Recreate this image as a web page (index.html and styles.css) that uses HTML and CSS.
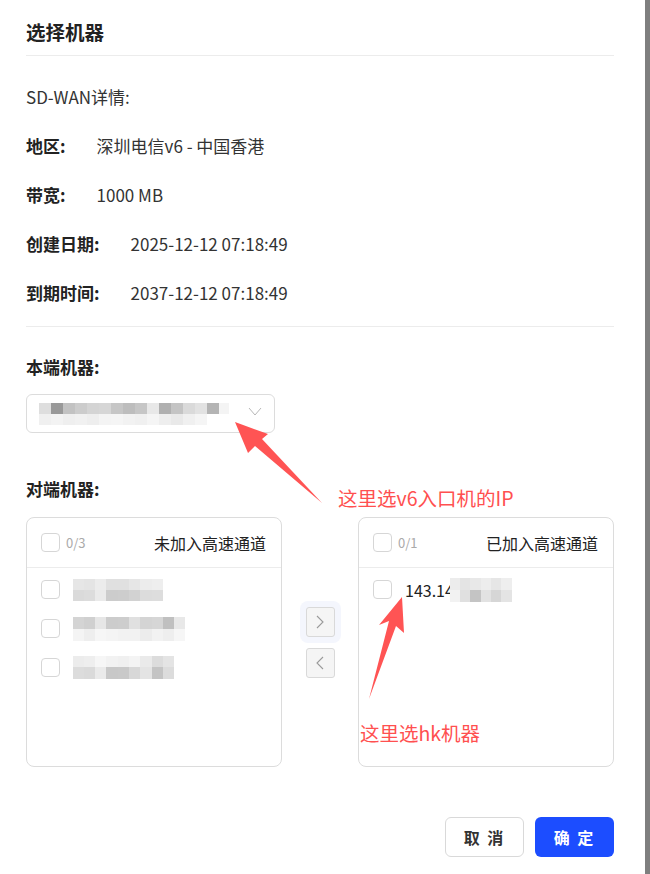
FILE: index.html
```html
<!DOCTYPE html>
<html lang="zh-CN">
<head>
    <meta charset="UTF-8">
    <meta name="viewport" content="width=device-width, initial-scale=1.0">
    <title>选择机器</title>
    <link rel="stylesheet" href="styles.css">
</head>
<body>
    <div class="modal">
        <div class="modal-header">选择机器</div>

        <div class="modal-body">
            <div class="detail-title">SD-WAN详情:</div>
            <div class="detail-row"><span class="label">地区:</span><span class="value">深圳电信v6 - 中国香港</span></div>
            <div class="detail-row"><span class="label">带宽:</span><span class="value">1000 MB</span></div>
            <div class="detail-row"><span class="label">创建日期:</span><span class="value">2025-12-12 07:18:49</span></div>
            <div class="detail-row"><span class="label">到期时间:</span><span class="value">2037-12-12 07:18:49</span></div>

            <div class="divider"></div>

            <div class="field-label">本端机器:</div>
            <div class="select">
                <svg class="mosaic" width="190" height="22" viewBox="0 0 190 22">
                    <rect x="0" y="0" width="12" height="11" fill="#dedede"/>
                    <rect x="12" y="0" width="12" height="11" fill="#999999"/>
                    <rect x="24" y="0" width="12" height="11" fill="#c2c2c2"/>
                    <rect x="36" y="0" width="12" height="11" fill="#cccccc"/>
                    <rect x="48" y="0" width="12" height="11" fill="#d4d4d4"/>
                    <rect x="60" y="0" width="12" height="11" fill="#d6d6d6"/>
                    <rect x="72" y="0" width="12" height="11" fill="#c6c6c6"/>
                    <rect x="84" y="0" width="12" height="11" fill="#bdbdbd"/>
                    <rect x="96" y="0" width="12" height="11" fill="#c6c6c6"/>
                    <rect x="108" y="0" width="12" height="11" fill="#e8e8e8"/>
                    <rect x="120" y="0" width="12" height="11" fill="#b0b0b0"/>
                    <rect x="132" y="0" width="12" height="11" fill="#c4c4c4"/>
                    <rect x="144" y="0" width="12" height="11" fill="#dadada"/>
                    <rect x="156" y="0" width="12" height="11" fill="#e2e2e2"/>
                    <rect x="168" y="0" width="12" height="11" fill="#b4b4b4"/>
                    <rect x="180" y="0" width="10" height="11" fill="#f4f4f4"/>
                    <rect x="0" y="11" width="12" height="11" fill="#f0f0f0"/>
                    <rect x="12" y="11" width="12" height="11" fill="#f3f3f3"/>
                    <rect x="24" y="11" width="12" height="11" fill="#efefef"/>
                    <rect x="36" y="11" width="12" height="11" fill="#f1f1f1"/>
                    <rect x="48" y="11" width="12" height="11" fill="#eeeeee"/>
                    <rect x="60" y="11" width="12" height="11" fill="#f4f4f4"/>
                    <rect x="72" y="11" width="12" height="11" fill="#f5f5f5"/>
                    <rect x="84" y="11" width="12" height="11" fill="#f2f2f2"/>
                    <rect x="96" y="11" width="12" height="11" fill="#f0f0f0"/>
                    <rect x="108" y="11" width="12" height="11" fill="#f5f5f5"/>
                    <rect x="120" y="11" width="12" height="11" fill="#eeeeee"/>
                    <rect x="132" y="11" width="12" height="11" fill="#e9e9e9"/>
                    <rect x="144" y="11" width="12" height="11" fill="#f0f0f0"/>
                    <rect x="156" y="11" width="12" height="11" fill="#f5f5f5"/>
                </svg>
                <svg class="chevron" width="14" height="9" viewBox="0 0 14 9">
                    <polyline points="1,1 7,8 13,1" fill="none" stroke="#b8b8b8" stroke-width="1"/>
                </svg>
            </div>

            <div class="field-label peer">对端机器:</div>

            <div class="transfer">
                <div class="panel">
                    <div class="panel-header">
                        <span class="checkbox"></span>
                        <span class="count">0/3</span>
                        <span class="panel-title">未加入高速通道</span>
                    </div>
                    <div class="panel-list">
                        <div class="item">
                            <span class="checkbox"></span>
                            <svg width="90" height="22" viewBox="0 0 90 22">
                                <rect x="0" y="0" width="11" height="11" fill="#e6e6e6"/>
                                <rect x="11" y="0" width="11" height="11" fill="#e4e4e4"/>
                                <rect x="22" y="0" width="11" height="11" fill="#ececec"/>
                                <rect x="33" y="0" width="12" height="11" fill="#e0e0e0"/>
                                <rect x="45" y="0" width="11" height="11" fill="#e0e0e0"/>
                                <rect x="56" y="0" width="11" height="11" fill="#e6e6e6"/>
                                <rect x="67" y="0" width="12" height="11" fill="#ececec"/>
                                <rect x="79" y="0" width="11" height="11" fill="#eeeeee"/>
                                <rect x="0" y="11" width="11" height="11" fill="#dadada"/>
                                <rect x="11" y="11" width="11" height="11" fill="#dcdcdc"/>
                                <rect x="22" y="11" width="11" height="11" fill="#eaeaea"/>
                                <rect x="33" y="11" width="12" height="11" fill="#cccccc"/>
                                <rect x="45" y="11" width="11" height="11" fill="#cdcdcd"/>
                                <rect x="56" y="11" width="11" height="11" fill="#d2d2d2"/>
                                <rect x="67" y="11" width="12" height="11" fill="#dcdcdc"/>
                                <rect x="79" y="11" width="11" height="11" fill="#dddddd"/>
                            </svg>
                        </div>
                        <div class="item">
                            <span class="checkbox"></span>
                            <svg width="112" height="24" viewBox="0 0 112 24">
                                <rect x="0" y="0" width="11" height="12" fill="#d4d4d4"/>
                                <rect x="11" y="0" width="11" height="12" fill="#d0d0d0"/>
                                <rect x="22" y="0" width="11" height="12" fill="#e6e6e6"/>
                                <rect x="33" y="0" width="12" height="12" fill="#cccccc"/>
                                <rect x="45" y="0" width="11" height="12" fill="#cdcdcd"/>
                                <rect x="56" y="0" width="11" height="12" fill="#e0e0e0"/>
                                <rect x="67" y="0" width="12" height="12" fill="#d4d4d4"/>
                                <rect x="79" y="0" width="11" height="12" fill="#d6d6d6"/>
                                <rect x="90" y="0" width="11" height="12" fill="#c0c0c0"/>
                                <rect x="101" y="0" width="11" height="12" fill="#e8e8e8"/>
                                <rect x="0" y="12" width="11" height="12" fill="#f4f4f4"/>
                                <rect x="11" y="12" width="11" height="12" fill="#eeeeee"/>
                                <rect x="22" y="12" width="11" height="12" fill="#f6f6f6"/>
                                <rect x="33" y="12" width="12" height="12" fill="#f4f4f4"/>
                                <rect x="45" y="12" width="11" height="12" fill="#f2f2f2"/>
                                <rect x="56" y="12" width="11" height="12" fill="#f2f2f2"/>
                                <rect x="67" y="12" width="12" height="12" fill="#ececec"/>
                                <rect x="79" y="12" width="11" height="12" fill="#f2f2f2"/>
                                <rect x="90" y="12" width="11" height="12" fill="#eeeeee"/>
                                <rect x="101" y="12" width="11" height="12" fill="#f6f6f6"/>
                            </svg>
                        </div>
                        <div class="item">
                            <span class="checkbox"></span>
                            <svg width="101" height="23" viewBox="0 0 101 23">
                                <rect x="0" y="0" width="11" height="11" fill="#ececec"/>
                                <rect x="11" y="0" width="11" height="11" fill="#eeeeee"/>
                                <rect x="22" y="0" width="11" height="11" fill="#f6f6f6"/>
                                <rect x="33" y="0" width="12" height="11" fill="#f2f2f2"/>
                                <rect x="45" y="0" width="11" height="11" fill="#f0f0f0"/>
                                <rect x="56" y="0" width="11" height="11" fill="#f4f4f4"/>
                                <rect x="67" y="0" width="12" height="11" fill="#eaeaea"/>
                                <rect x="79" y="0" width="11" height="11" fill="#dcdcdc"/>
                                <rect x="90" y="0" width="11" height="11" fill="#e4e4e4"/>
                                <rect x="0" y="11" width="11" height="12" fill="#dcdcdc"/>
                                <rect x="11" y="11" width="11" height="12" fill="#dadada"/>
                                <rect x="22" y="11" width="11" height="12" fill="#eaeaea"/>
                                <rect x="33" y="11" width="12" height="12" fill="#c8c8c8"/>
                                <rect x="45" y="11" width="11" height="12" fill="#c9c9c9"/>
                                <rect x="56" y="11" width="11" height="12" fill="#d8d8d8"/>
                                <rect x="67" y="11" width="12" height="12" fill="#e4e4e4"/>
                                <rect x="79" y="11" width="11" height="12" fill="#c4c4c4"/>
                                <rect x="90" y="11" width="11" height="12" fill="#dcdcdc"/>
                            </svg>
                        </div>
                    </div>
                </div>

                <div class="ops">
                    <div class="op-wrap">
                        <button class="op-btn">
                            <svg width="8" height="14" viewBox="0 0 8 14"><polyline points="1,1 7,7 1,13" fill="none" stroke="#9a9a9a" stroke-width="1.1"/></svg>
                        </button>
                    </div>
                    <div class="op-wrap plain">
                        <button class="op-btn">
                            <svg width="8" height="14" viewBox="0 0 8 14"><polyline points="7,1 1,7 7,13" fill="none" stroke="#9a9a9a" stroke-width="1.1"/></svg>
                        </button>
                    </div>
                </div>

                <div class="panel">
                    <div class="panel-header">
                        <span class="checkbox"></span>
                        <span class="count">0/1</span>
                        <span class="panel-title">已加入高速通道</span>
                    </div>
                    <div class="panel-list">
                        <div class="item">
                            <span class="checkbox"></span>
                            <span class="item-text">143.14</span>
                            <svg class="tail-mosaic" width="62" height="24" viewBox="0 0 62 24">
                                <rect x="0" y="0" width="10" height="12" fill="#ececec"/>
                                <rect x="10" y="0" width="10" height="12" fill="#e4e4e4"/>
                                <rect x="20" y="0" width="11" height="12" fill="#e8e8e8"/>
                                <rect x="31" y="0" width="10" height="12" fill="#ededed"/>
                                <rect x="41" y="0" width="10" height="12" fill="#e6e6e6"/>
                                <rect x="51" y="0" width="11" height="12" fill="#eeeeee"/>
                                <rect x="0" y="12" width="10" height="12" fill="#f2f2f2"/>
                                <rect x="10" y="12" width="10" height="12" fill="#e0e0e0"/>
                                <rect x="20" y="12" width="11" height="12" fill="#c4c4c4"/>
                                <rect x="31" y="12" width="10" height="12" fill="#e2e2e2"/>
                                <rect x="41" y="12" width="10" height="12" fill="#d6d6d6"/>
                                <rect x="51" y="12" width="11" height="12" fill="#e4e4e4"/>
                            </svg>
                        </div>
                    </div>
                </div>
            </div>
        </div>

        <div class="modal-footer">
            <button class="btn btn-cancel">取 消</button>
            <button class="btn btn-ok">确 定</button>
        </div>

        <!-- red annotations drawn over the screenshot -->
        <svg class="annot" width="645" height="874" viewBox="0 0 645 874">
            <polygon points="235,422 268,434 262,439 322,503 255,446 248,453" fill="#ff5454"/>
            <polygon points="402,597 404,633 396,626 369,699 389,621 379,625" fill="#ff5454"/>
        </svg>
        <span class="note note-local">这里选v6入口机的IP</span>
        <span class="note note-peer">这里选hk机器</span>
    </div>
    <div class="edge"></div>
</body>
</html>
```

FILE: styles.css
```css
body {
    margin: 0;
    display: flex;
    background-color: #7f7f7f;
    font-family: "Noto Sans CJK SC", "Liberation Sans", sans-serif;
    color: #333;
    font-size: 16px;
}

.modal {
    position: relative;
    width: 645px;
    height: 874px;
    padding: 0 31px 0 26px;
    box-sizing: border-box;
    background-color: #fff;
}

.edge {
    flex: 1;
}

.modal-header {
    padding: 20px 0 11px;
    line-height: 24px;
    font-size: 19.5px;
    font-weight: bold;
    color: #222;
    border-bottom: 1px solid #ececec;
}

.detail-title {
    margin-top: 29px;
    line-height: 24px;
    font-size: 17px;
}

.detail-row {
    margin-top: 25px;
    line-height: 24px;
    font-size: 17px;
}

.label {
    display: inline-block;
    margin-right: 31px;
    font-weight: bold;
    color: #222;
}

.divider {
    margin-top: 21px;
    border-top: 1px solid #ececec;
}

.field-label {
    margin-top: 28px;
    line-height: 24px;
    font-size: 17px;
    font-weight: bold;
    color: #222;
}

.field-label.peer {
    margin-top: 44px;
}

.select {
    margin-top: 15px;
    width: 249px;
    height: 39px;
    box-sizing: border-box;
    border: 1px solid #dcdcdc;
    border-radius: 6px;
    display: flex;
    align-items: center;
    padding-left: 12px;
}

.select .chevron {
    margin-left: 19px;
    margin-top: -4px;
}

.transfer {
    margin-top: 16px;
    display: flex;
    align-items: center;
}

.panel {
    width: 256px;
    height: 250px;
    box-sizing: border-box;
    border: 1px solid #dcdcdc;
    border-radius: 8px;
}

.panel-header {
    height: 50px;
    box-sizing: border-box;
    padding: 0 15px 0 14px;
    display: flex;
    align-items: center;
    border-bottom: 1px solid #ececec;
}

.checkbox {
    width: 19px;
    height: 19px;
    box-sizing: border-box;
    border: 1px solid #d6d6d6;
    border-radius: 4px;
    flex-shrink: 0;
}

.count {
    margin-left: 6px;
    font-size: 13px;
    color: #aaa;
}

.panel-title {
    margin-left: auto;
    color: #222;
}

.panel-list {
    padding-top: 2px;
}

.item {
    height: 39px;
    padding-left: 14px;
    display: flex;
    align-items: center;
    gap: 13px;
}

.item-text {
    color: #222;
}

.item .tail-mosaic {
    margin-left: -17px;
}

.ops {
    width: 76px;
    margin-bottom: 6px;
    display: flex;
    flex-direction: column;
    align-items: center;
    gap: 5px;
}

.op-wrap {
    padding: 6px;
    border-radius: 8px;
    background-color: #f4f6fd;
    display: flex;
}

.op-wrap.plain {
    padding: 0 6px;
    background-color: transparent;
}

.op-btn {
    width: 29px;
    height: 30px;
    padding: 0;
    border: 1px solid #d9d9d9;
    border-radius: 3px;
    background-color: #f5f5f5;
    display: flex;
    align-items: center;
    justify-content: center;
}

.modal-footer {
    margin-top: 50px;
    display: flex;
    justify-content: flex-end;
    gap: 11px;
}

.btn {
    width: 79px;
    height: 40px;
    border-radius: 6px;
    font-family: inherit;
    font-size: 16px;
    font-weight: bold;
    letter-spacing: 2px;
}

.btn-cancel {
    background-color: #fff;
    border: 1px solid #d9d9d9;
    color: #333;
}

.btn-ok {
    background-color: #1c4dff;
    border: none;
    color: #fff;
}

.annot {
    position: absolute;
    top: 0;
    left: 0;
    pointer-events: none;
}

.note {
    position: absolute;
    font-size: 19.5px;
    line-height: 24px;
    color: #ff5050;
}

.note-local {
    left: 338px;
    top: 486px;
}

.note-peer {
    left: 360px;
    top: 721px;
}
```
